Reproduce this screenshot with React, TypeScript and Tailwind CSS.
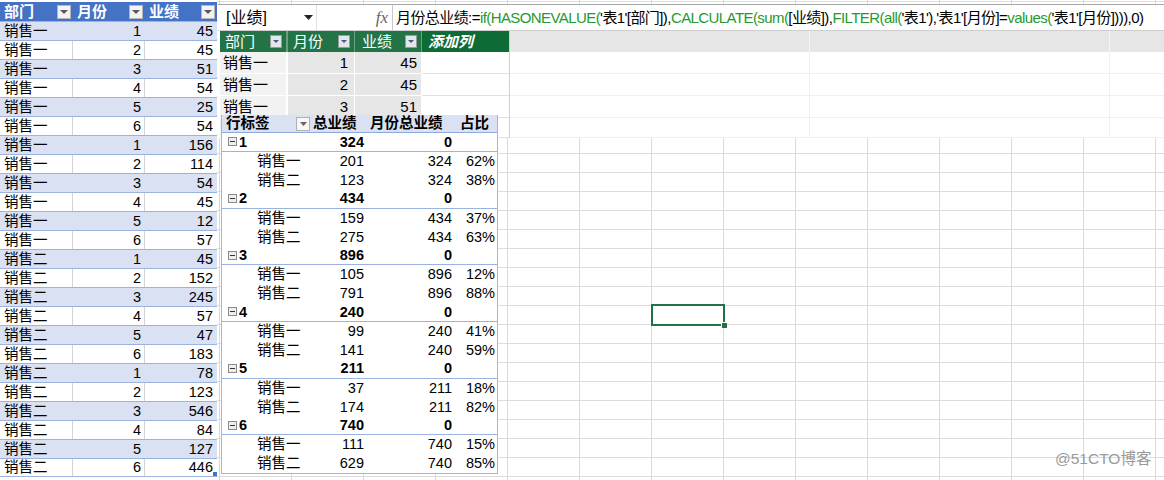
import React from "react";

type LRow = [string, number, number];
const leftRows: LRow[] = [
  ["销售一", 1, 45], ["销售一", 2, 45], ["销售一", 3, 51], ["销售一", 4, 54], ["销售一", 5, 25], ["销售一", 6, 54],
  ["销售一", 1, 156], ["销售一", 2, 114], ["销售一", 3, 54], ["销售一", 4, 45], ["销售一", 5, 12], ["销售一", 6, 57],
  ["销售二", 1, 45], ["销售二", 2, 152], ["销售二", 3, 245], ["销售二", 4, 57], ["销售二", 5, 47], ["销售二", 6, 183],
  ["销售二", 1, 78], ["销售二", 2, 123], ["销售二", 3, 546], ["销售二", 4, 84], ["销售二", 5, 127], ["销售二", 6, 446],
];

const groups = [
  { m: 1, total: 324, a: [201, 62], b: [123, 38] },
  { m: 2, total: 434, a: [159, 37], b: [275, 63] },
  { m: 3, total: 896, a: [105, 12], b: [791, 88] },
  { m: 4, total: 240, a: [99, 41], b: [141, 59] },
  { m: 5, total: 211, a: [37, 18], b: [174, 82] },
  { m: 6, total: 740, a: [111, 15], b: [629, 85] },
];

const formula: [string, boolean][] = [
  ["月份总业绩:=", false],
  ["if(", true],
  ["HASONEVALUE(", true],
  ["'表1'[部门]),", false],
  ["CALCULATE(", true],
  ["sum(", true],
  ["[业绩]),", false],
  ["FILTER(", true],
  ["all(", true],
  ["'表1'),'表1'[月份]=", false],
  ["values(", true],
  ["'表1'[月份]))),0)", false],
];

function Tri({ color, w = 8, h = 4 }: { color: string; w?: number; h?: number }) {
  return (
    <svg width={w} height={h} viewBox={`0 0 ${w} ${h}`}>
      <path d={`M0 0H${w}L${w / 2} ${h}Z`} fill={color} />
    </svg>
  );
}

function LeftDrop() {
  return (
    <div className="w-[14px] h-[14px] ml-auto mr-[2px] bg-[#f3f3f3] border border-[#b5b5b5] flex items-center justify-center">
      <Tri color="#5a5a5a" w={8} h={4} />
    </div>
  );
}

function PPDrop() {
  return (
    <div className="w-[12px] h-[13px] ml-auto mr-[4px] bg-[#e4e6ea] border border-[#9a9a9a] flex items-center justify-center">
      <Tri color="#44598a" w={6} h={3} />
    </div>
  );
}

function PivotDrop() {
  return (
    <div className="w-[14px] h-[14px] ml-auto bg-[#f7f7f7] border border-[#b0b0b0] flex items-center justify-center">
      <Tri color="#666666" w={7} h={4} />
    </div>
  );
}

function Minus() {
  return (
    <div className="w-[9px] h-[9px] border border-[#8a8a8a] bg-[#eeeeee] flex items-center justify-center">
      <div className="w-[5px] h-[1px] bg-[#333333]" />
    </div>
  );
}

function LeftTable() {
  return (
    <div className="w-[217px] shrink-0 pt-[2px] flex flex-col text-[14.5px] leading-none">
      <div className="h-[19px] shrink-0 flex bg-[#4472c4] text-white font-bold text-[15px]">
        {["部门", "月份", "业绩"].map((t, i) => (
          <div key={t} className={`${i === 0 ? "w-[73px]" : "w-[72px]"} flex items-center pl-[4px]`}>
            <span>{t}</span>
            <LeftDrop />
          </div>
        ))}
      </div>
      {leftRows.map((r, i) => {
        const band = i % 2 === 0;
        return (
          <div
            key={i}
            className={`h-[19px] shrink-0 flex border-t border-[#9bb3df] ${band ? "bg-[#d9e1f2]" : "bg-white"} ${i === 23 ? "border-b" : ""}`}
          >
            <div className={`w-[73px] flex items-center pl-[4px] border-r ${band ? "border-transparent" : "border-[#d4d4d4]"}`}>
              {r[0]}
            </div>
            <div className={`w-[72px] flex items-center justify-end pr-[3px] border-r ${band ? "border-transparent" : "border-[#d4d4d4]"}`}>
              {r[1]}
            </div>
            <div className="relative w-[72px] flex items-center justify-end pr-[4px]">
              {r[2]}
              {i === 23 && <span className="absolute right-0 bottom-0 w-[4px] h-[4px] bg-[#4472c4]" />}
            </div>
          </div>
        );
      })}
    </div>
  );
}

function FormulaBar() {
  return (
    <div className="h-[26px] shrink-0 ml-[1px] bg-white border-b border-[#cfcfcf] flex items-center leading-none">
      <div className="w-[99px] h-full flex items-center pl-[8px] border-r border-[#e0e0e0] text-[16px]">
        <span>[业绩]</span>
        <span className="ml-auto mr-[3px] flex">
          <Tri color="#222222" w={9} h={5} />
        </span>
      </div>
      <div className="w-[76px] h-full flex items-center justify-end pr-[4px] border-r border-[#c8c8c8] font-['Liberation_Serif',serif] italic text-[17px] text-[#666666]">
        fx
      </div>
      <div className="pl-[3px] whitespace-nowrap text-[15px] tracking-[-0.58px] font-['Liberation_Sans','Noto_Sans_CJK_SC',sans-serif]">
        {formula.map(([t, g], i) => (
          <span key={i} className={g ? "text-[#1f9a2e]" : "text-black"}>
            {t}
          </span>
        ))}
      </div>
    </div>
  );
}

function PowerPivot() {
  const rows: [string, string, string][] = [
    ["销售一", "1", "45"],
    ["销售一", "2", "45"],
    ["销售一", "3", "51"],
    ["", "", ""],
  ];
  return (
    <div className="shrink-0 ml-[1px] bg-white flex flex-col text-[15px] leading-none">
      <div className="h-[21px] flex">
        <div className="w-[2px]" />
        <div className="w-[68px] bg-[#227447] border-r-2 border-[#6e9e82] flex items-center pl-[5px] text-white">
          部门
          <PPDrop />
        </div>
        <div className="w-[67px] bg-[#227447] border-r border-[#6e9e82] flex items-center pl-[5px] text-white">
          月份
          <PPDrop />
        </div>
        <div className="w-[67px] bg-[#227447] border-r border-[#6e9e82] flex items-center pl-[7px] text-white">
          业绩
          <PPDrop />
        </div>
        <div className="w-[87px] bg-[#0f6b36] flex items-center pl-[6px] text-white font-bold italic">添加列</div>
        <div className="flex-1 flex bg-[#e6e6e6] border-l border-[#cfcfcf]">
          <div className="w-[300px] border-r border-[#f4f4f4]" />
          <div className="w-[300px] border-r border-[#f4f4f4]" />
        </div>
      </div>
      {rows.map((r, i) => (
        <div key={i} className={`${i === 3 ? "h-[20px]" : "h-[22px]"} flex`}>
          <div className="w-[2px]" />
          <div className="w-[68px] bg-[#f2f2f2] border-r-2 border-b border-white flex items-center pl-[3px]">{r[0]}</div>
          <div className="w-[67px] bg-[#e6e6e6] border-r border-b border-white flex items-center justify-end pr-[6px]">{r[1]}</div>
          <div className="w-[67px] bg-[#e6e6e6] border-r border-b border-white flex items-center justify-end pr-[4px]">{r[2]}</div>
          <div className="w-[87px] border-b border-[#e1e1e1]" />
          <div className="flex-1 flex border-l border-[#cfcfcf]">
            <div className="w-[300px] border-r border-b border-[#efefef]" />
            <div className="w-[300px] border-r border-b border-[#efefef]" />
            <div className="flex-1 border-b border-[#efefef]" />
          </div>
        </div>
      ))}
    </div>
  );
}

function Pivot() {
  return (
    <div className="relative z-10 shrink-0 -mt-[23px] ml-[4px] w-[277px] bg-white border-x border-b border-[#a3b6da] text-[14.5px] leading-none">
      <div className="h-[18px] flex bg-[#d9e1f2] border-b border-[#8ea9db] font-bold">
        <div className="w-[88px] flex items-center pl-[4px]">
          行标签
          <PivotDrop />
        </div>
        <div className="w-[56px] flex items-center pl-[3px]">总业绩</div>
        <div className="w-[88px] flex items-center pl-[4px]">月份总业绩</div>
        <div className="w-[43px] flex items-center pl-[6px]">占比</div>
      </div>
      {groups.map((g) => (
        <React.Fragment key={g.m}>
          <div className="h-[18.9px] flex border-b border-[#9bb3df] font-bold">
            <div className="w-[88px] flex items-center pl-[6px] gap-[2px]">
              <Minus />
              <span>{g.m}</span>
            </div>
            <div className="w-[56px] flex items-center justify-end pr-[2px]">{g.total}</div>
            <div className="w-[88px] flex items-center justify-end pr-[2px]">0</div>
            <div className="w-[43px]" />
          </div>
          {[
            ["销售一", g.a],
            ["销售二", g.b],
          ].map(([name, v]) => {
            const vals = v as number[];
            return (
              <div key={name as string} className="h-[18.9px] flex">
                <div className="w-[88px] flex items-center pl-[35px]">{name as string}</div>
                <div className="w-[56px] flex items-center justify-end pr-[2px]">{vals[0]}</div>
                <div className="w-[88px] flex items-center justify-end pr-[2px]">{g.total}</div>
                <div className="w-[43px] flex items-center justify-end pr-[2px]">{vals[1]}%</div>
              </div>
            );
          })}
        </React.Fragment>
      ))}
    </div>
  );
}

export default function App() {
  return (
    <div className="relative w-[1164px] h-[480px] overflow-hidden bg-white flex font-['Liberation_Sans','Noto_Sans_CJK_SC',sans-serif] text-black">
      <LeftTable />
      <div className="relative flex-1 flex flex-col [background-image:repeating-linear-gradient(90deg,transparent_0_2px,#d9d9d9_2px_3px,transparent_3px_72px),repeating-linear-gradient(180deg,transparent_0_1px,#dcdcdc_1px_2px,transparent_2px_19px)]">
        <div className="h-[5px] shrink-0 ml-[1px] border-b border-[#a8a8a8]" />
        <FormulaBar />
        <PowerPivot />
        <Pivot />
      </div>
      <div className="absolute left-[651px] top-[304px] w-[74px] h-[22px] border-2 border-[#217346]" />
      <div className="absolute left-[721px] top-[322px] w-[6px] h-[6px] bg-[#217346] border-l border-t border-white" />
      <div className="absolute left-[1055px] top-[451px] text-[15.5px] leading-none text-[#9a9a9a] font-['Liberation_Sans','Noto_Sans_CJK_SC',sans-serif]">
        @51CTO博客
      </div>
    </div>
  );
}
